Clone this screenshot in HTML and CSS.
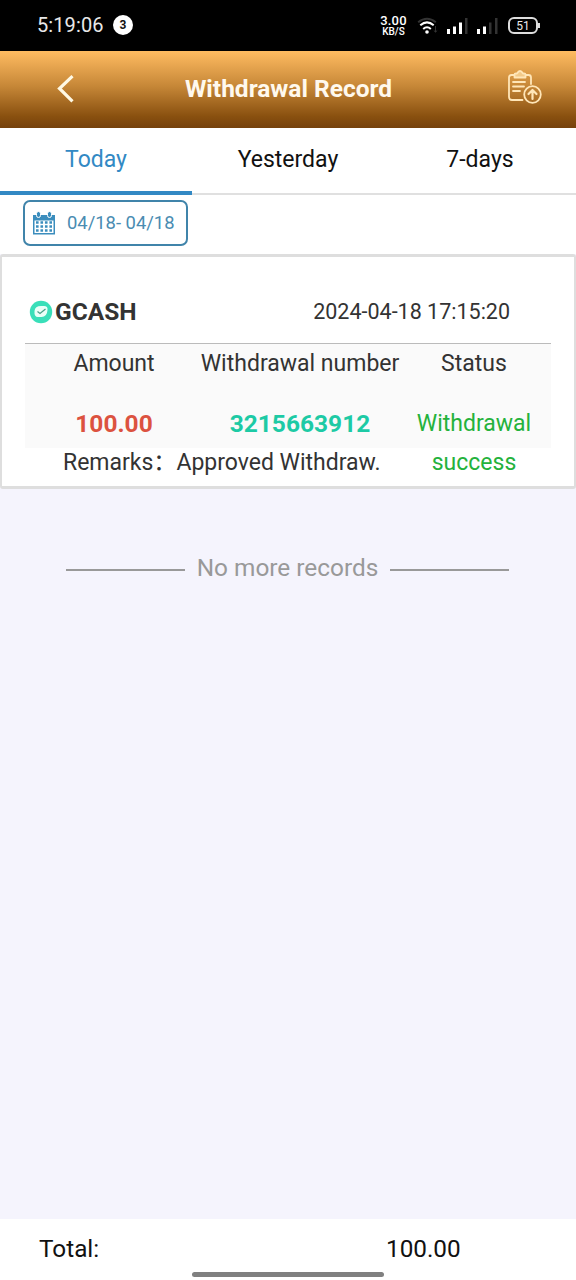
FILE: index.html
```html
<!DOCTYPE html>
<html lang="en">
<head>
<meta charset="utf-8">
<title>Withdrawal Record</title>
<link rel="stylesheet" href="styles.css">
</head>
<body>
<div class="app">
  <div class="statusbar">
    <span class="clock">5:19:06</span>
    <span class="count">3</span>
    <div class="indicators">
      <div class="speed"><span class="rate">3.00</span><span class="unit">KB/S</span></div>
      <svg class="wifi" width="22" height="18" viewBox="0 0 22 18" fill="none" stroke-width="2">
        <path d="M1.2 5.2Q10 -1.8 18.8 5.2" stroke="#333"/>
        <path d="M3.3 8.3Q10 2.4 16.7 8.3M6.2 12Q10 8.5 13.8 12" stroke="#fff"/>
        <circle cx="10" cy="15" r="1.8" fill="#fff"/>
        <path d="M18.5 9v6M16.8 13.5l1.7 1.6 1.7-1.6" stroke="#333" stroke-width="1"/>
      </svg>
      <svg class="signal" width="21" height="17" viewBox="0 0 21 17">
        <path d="M0 12h3v5H0zM6 9.500h3V17H6zM12 5.500h3V17h-3z" fill="#fff"/><path d="M18 1h2.500v16H18z" fill="#333"/>
      </svg>
      <svg class="signal" width="21" height="17" viewBox="0 0 21 17">
        <path d="M0 12h3v5H0zM6 9.500h3V17H6z" fill="#fff"/><path d="M12 5.500h2.500V17H12zM18 1h2.500v16H18z" fill="#333"/>
      </svg>
      <div class="battery">51</div>
    </div>
  </div>
  <header class="header">
    <svg class="back" width="18" height="30" viewBox="0 0 18 30" fill="none" stroke="#fff9e4" stroke-width="3.200"><path d="M16.500 2.200 3.500 14.500 16.500 27.300"/></svg>
    <h1 class="title">Withdrawal Record</h1>
    <svg class="report" width="36" height="36" viewBox="0 0 36 36" fill="none" stroke="#ffe6b8" stroke-width="1.800" stroke-linecap="round" stroke-linejoin="round">
      <path d="M7.500 5H4.500Q2 5 2 7.500V27Q2 30 5 30H15.500M18.500 5H21.500Q24 5 24 7.500V14"/>
      <path d="M7.500 7.500V4.500Q7.500 3.500 9 3.500H10Q13 -1.500 16 3.500H17Q18.500 3.500 18.500 4.500V7.500Z" fill="#f2c988"/>
      <path d="M6 12H18M6 16.500H17M6 21H13"/>
      <circle cx="25.500" cy="24.500" r="8.300"/>
      <path d="M25.500 29V20.500M21.500 24 25.500 20 29.500 24" stroke-width="2.200"/>
    </svg>
  </header>
  <nav class="tabs">
    <div class="tab active">Today</div>
    <div class="tab">Yesterday</div>
    <div class="tab">7-days</div>
  </nav>
  <div class="filter">
    <div class="range">
      <svg class="calendar" width="22" height="24" viewBox="0 0 22 24">
        <path d="M0 4H22V23.500H0Z" fill="#3b8dbd"/>
        <path d="M1.500 9.500H20.500V22H1.500Z" fill="#fff"/>
        <path d="M3 11.500H19M3 15.500H19M3 19.500H19" stroke="#3b8dbd" stroke-width="2.400" stroke-dasharray="2.600 1.870"/>
        <g stroke="#fff" stroke-width="1" fill="#3b8dbd"><rect x="3.500" y=".5" width="4" height="6" rx="2"/><rect x="14.500" y=".5" width="4" height="6" rx="2"/></g>
      </svg>
      <span class="dates">04/18- 04/18</span>
    </div>
  </div>
  <main class="list">
    <section class="card">
      <div class="card-head">
        <svg class="logo" width="24" height="24" viewBox="0 0 24 24">
          <circle cx="12" cy="12" r="11.200" fill="#39dfb9"/>
          <path d="M5.500 11Q6 6 12 6H15Q19 6 18.500 10 18 17 12.500 17H9Q5 17 5.500 11Z" fill="#eafff8"/>
          <path d="M8.500 11.500 11 13.500 16.500 9" fill="none" stroke="#489f88" stroke-width="1.200"/>
        </svg>
        <span class="method">GCASH</span>
        <span class="time">2024-04-18 17:15:20</span>
      </div>
      <div class="details">
        <div class="cell">Amount</div>
        <div class="cell">Withdrawal number</div>
        <div class="cell">Status</div>
        <div class="cell amount">100.00</div>
        <div class="cell number">3215663912</div>
        <div class="cell state">Withdrawal<br>success</div>
      </div>
      <div class="remarks"><span class="label">Remarks：</span><span class="remark">Approved Withdraw.</span></div>
    </section>
    <div class="end"><span>No more records</span></div>
  </main>
  <footer class="total">
    <span class="total-label">Total:</span>
    <span class="total-value">100.00</span>
    <div class="homebar"></div>
  </footer>
</div>
</body>
</html>
```
FILE: styles.css
```css
* { box-sizing: border-box; }
body { margin: 0; font-family: Roboto, "Noto Sans CJK SC", sans-serif; color: #333; }
.app { width: 576px; height: 1280px; display: flex; flex-direction: column; background: #f5f4fd; overflow: hidden; }
svg { display: block; flex: none; }

.statusbar { flex: none; height: 51px; padding: 0 36px 0 37px; background: #000; color: #e8e8e8; display: flex; align-items: center; }
.clock { font-size: 20px; letter-spacing: .1px; width: 76px; margin-top: -1px; }
.count { width: 20px; height: 20px; margin-top: -1px; border-radius: 50%; background: #fff; color: #111; font-size: 12px; font-weight: 700; line-height: 20px; text-align: center; }
.indicators { margin-left: auto; display: flex; align-items: center; }
.speed { width: 27px; display: flex; flex-direction: column; align-items: center; color: #fff; font-weight: 500; white-space: nowrap; }
.rate { font-size: 13px; line-height: 13px; letter-spacing: .2px; }
.unit { font-size: 10px; line-height: 10px; }
.wifi { margin-left: 10px; }
.signal { margin-left: 8px; }
.signal + .signal { margin-left: 9px; }
.battery { position: relative; width: 30px; height: 17px; margin: 0 2px 0 10px; border: 2px solid #ddd; border-radius: 6px; font-size: 12px; line-height: 14px; text-align: center; }
.battery::after { content: ""; position: absolute; right: -4px; top: 4px; width: 2px; height: 5px; background: #ddd; }

.header { flex: none; height: 77px; padding: 0 33px 0 56px; display: grid; grid-template-columns: 36px 1fr 36px; align-items: center; background: linear-gradient(#ffbc61, #c78838 45%, #89500f 85%, #75410c); }
.back { margin-top: -1px; }
.title { margin: -2px 0 0 -22px; font-size: 24.5px; font-weight: 700; line-height: 30px; text-align: center; color: #fff9ee; white-space: nowrap; }
.report { margin-top: -4px; }

.tabs { flex: none; height: 67px; display: grid; grid-template-columns: repeat(3, 1fr); background: #fff; color: #111; font-size: 23px; line-height: 64px; text-align: center; }
.tab { height: 67px; border-bottom: 2px solid #e0e0e0; }
.tab.active { color: #3289c4; border-bottom: 4px solid #3289c4; }

.filter { flex: none; height: 59px; padding: 5px 23px; background: #fff; }
.range { width: 165px; height: 46px; padding-left: 8px; border: 2px solid #4084aa; border-radius: 7px; display: flex; align-items: center; gap: 13px; color: #4a8cb2; font-size: 18.4px; white-space: nowrap; }
.dates { margin: -2px 0 0 -1px; }

.list { flex: 1; }
.card { height: 235px; padding: 27px 23px 0; border: solid #dedede; border-width: 3px 2px; border-radius: 3px; background: #fff; font-size: 23px; }
.card-head { height: 60px; padding: 0 41px 3px 4px; border-bottom: 1px solid #bbb; display: flex; align-items: center; line-height: 38px; }
.method { margin-left: 2px; font-size: 24.5px; font-weight: 700; }
.time { margin-left: auto; font-size: 21.500px; }
.details { height: 104px; padding-top: 1px; display: grid; grid-template-columns: 178px 194px 154px; grid-template-rows: 38px 38px; row-gap: 22px; background: #fafafa; line-height: 38px; }
.cell { display: flex; justify-content: center; text-align: center; white-space: nowrap; }
.amount { color: #dc5240; font-weight: 700; font-size: 24.5px; }
.number { color: #1dcaa5; font-weight: 700; font-size: 24.5px; }
.state { color: #24b23c; line-height: 38.500px; }
.remarks { margin-top: -4px; padding-left: 38px; line-height: 38px; display: flex; white-space: nowrap; }
.end { margin: 61px 67px 0 66px; display: flex; align-items: center; gap: 12px; color: #999; font-size: 24.4px; line-height: 36px; white-space: nowrap; }
.end::before, .end::after { content: ""; flex: 1; height: 2px; margin-top: 4px; background: #999; }

.total { position: relative; flex: none; height: 61px; padding-left: 39px; display: flex; background: #fff; color: #111; font-size: 24.300px; line-height: 60px; }
.total-label { width: 347px; }
.homebar { position: absolute; left: 192px; bottom: 3px; width: 192px; height: 5px; border-radius: 3px; background: #808080; }
```
